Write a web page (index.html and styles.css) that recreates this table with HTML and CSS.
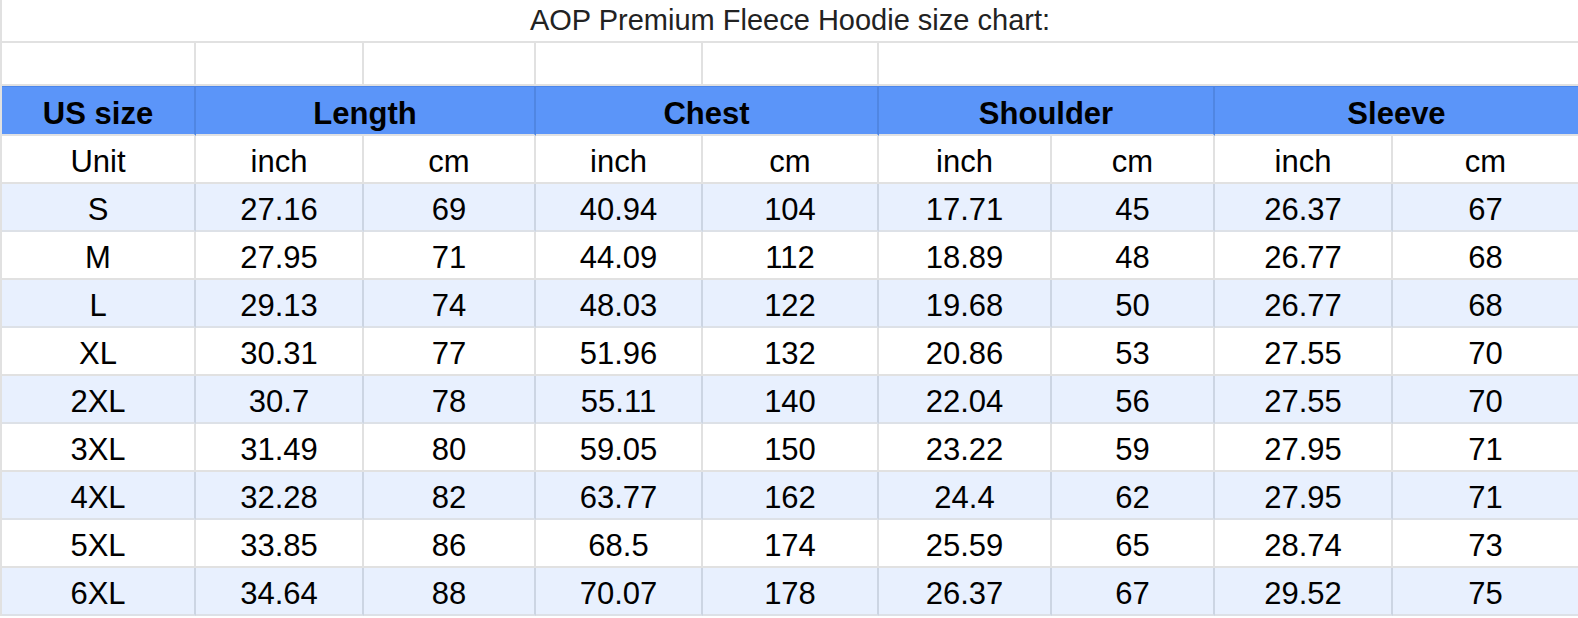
FILE: index.html
```html
<!DOCTYPE html>
<html lang="en">
<head>
<meta charset="utf-8">
<title>AOP Premium Fleece Hoodie size chart</title>
<link rel="stylesheet" href="styles.css">
</head>
<body>
<div class="sheet">
  <div class="row title-row">
    <div class="c title">AOP Premium Fleece Hoodie size chart:</div>
  </div>
  <div class="row blank-row">
    <div class="c"></div><div class="c"></div><div class="c"></div><div class="c"></div><div class="c"></div><div class="c span4 last"></div>
  </div>
  <div class="row head">
    <div class="c">US size</div>
    <div class="c span2">Length</div>
    <div class="c span2">Chest</div>
    <div class="c span2">Shoulder</div>
    <div class="c span2 last">Sleeve</div>
  </div>
  <div class="row">
    <div class="c">Unit</div><div class="c">inch</div><div class="c">cm</div><div class="c">inch</div><div class="c">cm</div><div class="c">inch</div><div class="c">cm</div><div class="c">inch</div><div class="c last">cm</div>
  </div>
  <div class="row band">
    <div class="c">S</div><div class="c">27.16</div><div class="c">69</div><div class="c">40.94</div><div class="c">104</div><div class="c">17.71</div><div class="c">45</div><div class="c">26.37</div><div class="c last">67</div>
  </div>
  <div class="row">
    <div class="c">M</div><div class="c">27.95</div><div class="c">71</div><div class="c">44.09</div><div class="c">112</div><div class="c">18.89</div><div class="c">48</div><div class="c">26.77</div><div class="c last">68</div>
  </div>
  <div class="row band">
    <div class="c">L</div><div class="c">29.13</div><div class="c">74</div><div class="c">48.03</div><div class="c">122</div><div class="c">19.68</div><div class="c">50</div><div class="c">26.77</div><div class="c last">68</div>
  </div>
  <div class="row">
    <div class="c">XL</div><div class="c">30.31</div><div class="c">77</div><div class="c">51.96</div><div class="c">132</div><div class="c">20.86</div><div class="c">53</div><div class="c">27.55</div><div class="c last">70</div>
  </div>
  <div class="row band">
    <div class="c">2XL</div><div class="c">30.7</div><div class="c">78</div><div class="c">55.11</div><div class="c">140</div><div class="c">22.04</div><div class="c">56</div><div class="c">27.55</div><div class="c last">70</div>
  </div>
  <div class="row">
    <div class="c">3XL</div><div class="c">31.49</div><div class="c">80</div><div class="c">59.05</div><div class="c">150</div><div class="c">23.22</div><div class="c">59</div><div class="c">27.95</div><div class="c last">71</div>
  </div>
  <div class="row band">
    <div class="c">4XL</div><div class="c">32.28</div><div class="c">82</div><div class="c">63.77</div><div class="c">162</div><div class="c">24.4</div><div class="c">62</div><div class="c">27.95</div><div class="c last">71</div>
  </div>
  <div class="row">
    <div class="c">5XL</div><div class="c">33.85</div><div class="c">86</div><div class="c">68.5</div><div class="c">174</div><div class="c">25.59</div><div class="c">65</div><div class="c">28.74</div><div class="c last">73</div>
  </div>
  <div class="row band">
    <div class="c">6XL</div><div class="c">34.64</div><div class="c">88</div><div class="c">70.07</div><div class="c">178</div><div class="c">26.37</div><div class="c">67</div><div class="c">29.52</div><div class="c last">75</div>
  </div>
</div>
</body>
</html>
```

FILE: styles.css
```css
* { box-sizing: border-box; }
html, body {
  margin: 0;
  padding: 0;
  background: #ffffff;
}
body {
  font-family: "Liberation Sans", Arial, sans-serif;
  color: #000000;
}
.sheet {
  width: 1578px;
  display: grid;
  grid-template-columns: 194px 168px 172px 167px 176px 173px 163px 178px 1fr;
  grid-template-rows: 43px 43px 50px;
  grid-auto-rows: 48px;
  border-left: 2px solid #e1e1e1;
}
.row { display: contents; }
.c {
  display: flex;
  align-items: center;
  justify-content: center;
  font-size: 31px;
  line-height: 1;
  padding-top: 4px;
  border-right: 2px solid #e1e1e1;
  border-bottom: 2px solid #e1e1e1;
  background: #ffffff;
  white-space: nowrap;
}
.c.last { border-right: none; }
.span2 { grid-column: span 2; }
.span4 { grid-column: span 4; }

.title-row .c.title {
  grid-column: 1 / -1;
  height: 43px;
  border-right: none;
  font-size: 29px;
  color: #222222;
  padding-top: 0;
  padding-bottom: 1px;
}
.blank-row .c { height: 43px; }

.head .c {
  background: #5b95f9;
  font-weight: bold;
  border-top: 1px solid #4c86ea;
  border-right-color: #5086e2;
  border-bottom-color: #e0e1e3;
  padding-top: 5px;
}
.head .c.last { border-right: none; }

.band .c {
  background: #e8f0fe;
  border-right-color: #ccd5e3;
  border-bottom-color: #dde1e7;
}
.band .c.last { border-right: none; }
```
